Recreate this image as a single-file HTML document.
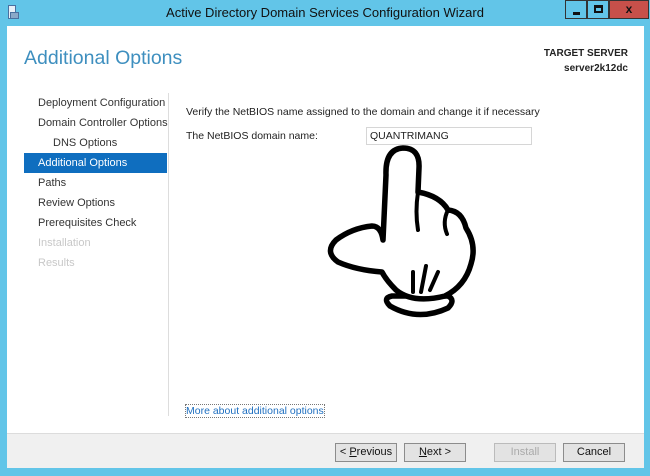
<!DOCTYPE html><html><head><style>
*{margin:0;padding:0;box-sizing:border-box}
body{width:650px;height:476px;background:#62c5e8;font-family:"Liberation Sans",sans-serif;position:relative;overflow:hidden;font-size:11px;color:#222}
.a{position:absolute}
.nav{position:absolute;left:38px;font-size:11px;color:#333}
.btn{position:absolute;top:443px;height:19px;width:62px;border:1px solid #8c8c8c;background:#e3e3e3;font-size:11px;text-align:center;line-height:17px;color:#111}
</style></head><body>
<div class="a" style="left:0;top:0;width:650px;height:26px;background:#62c5e8"></div>
<div class="a" style="left:8px;top:5px;width:8px;height:14px;background:#e8f0f8;border:1px solid #4a70a0"></div>
<div class="a" style="left:10px;top:12px;width:9px;height:7px;background:#8aa8c8;border:1px solid #4a70a0"></div>
<div class="a" style="left:0;top:5px;width:650px;text-align:center;font-size:13px;color:#111">Active Directory Domain Services Configuration Wizard</div>
<div class="a" style="left:565px;top:0;width:22px;height:19px;background:#62c5e8;border:1px solid #333"><div class="a" style="left:7px;top:11px;width:7px;height:3px;background:#111"></div></div>
<div class="a" style="left:587px;top:0;width:22px;height:19px;border:1px solid #333"><div class="a" style="left:6px;top:4px;width:9px;height:8px;border:2px solid #111;border-top-width:3px"></div></div>
<div class="a" style="left:609px;top:0;width:40px;height:19px;background:#c7504a;border:1px solid #333;color:#111;font-weight:bold;text-align:center;font-size:12px;line-height:17px">x</div>
<div class="a" style="left:7px;top:26px;width:637px;height:407px;background:#fff"></div>
<div class="a" style="left:7px;top:433px;width:637px;height:35px;background:#f0f0f0;border-top:1px solid #dcdcdc"></div>
<div class="a" style="left:24px;top:47px;font-size:19.5px;color:#3e8fbf">Additional Options</div>
<div class="a" style="right:22px;top:46px;font-size:10px;text-align:right;line-height:15px;color:#222;font-weight:bold">TARGET SERVER<br>server2k12dc</div>
<div class="nav" style="top:97px">Deployment Configuration</div>
<div class="nav" style="top:117px">Domain Controller Options</div>
<div class="nav" style="top:137px;left:53px">DNS Options</div>
<div class="a" style="left:24px;top:153px;width:143px;height:20px;background:#0f6ebf"></div>
<div class="nav" style="top:157px;color:#fff">Additional Options</div>
<div class="nav" style="top:177px">Paths</div>
<div class="nav" style="top:197px">Review Options</div>
<div class="nav" style="top:217px">Prerequisites Check</div>
<div class="nav" style="top:237px;color:#c8c8c8">Installation</div>
<div class="nav" style="top:257px;color:#c8c8c8">Results</div>
<div class="a" style="left:168px;top:93px;width:1px;height:323px;background:#ddd"></div>
<div class="a" style="left:186px;top:106px;font-size:10.5px">Verify the NetBIOS name assigned to the domain and change it if necessary</div>
<div class="a" style="left:186px;top:130px;font-size:10.5px">The NetBIOS domain name:</div>
<div class="a" style="left:366px;top:127px;width:166px;height:18px;border:1px solid #d6d6d6;padding:2px 3px;font-size:10.5px">QUANTRIMANG</div>
<div class="a" style="left:185px;top:404px;font-size:10.5px;color:#1e6fc0;border:1px dotted #777;padding:0 0">More about additional options</div>
<svg class="a" style="left:0;top:0" width="650" height="476">
<g fill="#fff" stroke="#000" stroke-width="5.5" stroke-linejoin="round" stroke-linecap="round">
<path d="M390 306 Q418 322 448 308 Q456 300 448 296 L392 296 Q382 298 390 306Z"/>
<path d="M386 175 Q385 149 403 148 Q420 148 419 168 L418 192 Q440 196 448 210 Q462 211 466 228 Q477 245 471 264 Q465 286 445 296 Q413 304 396 290 Q386 280 382 272 Q356 270 338 262 Q324 252 336 240 Q352 228 372 226 Q381 226 383 240 Z"/>
</g>
<g fill="none" stroke="#000" stroke-width="4" stroke-linecap="round">
<path d="M418 192 Q415 212 418 230"/><path d="M448 210 Q442 222 447 234"/>
<path d="M413 272 L413 292"/><path d="M426 266 L421 292"/><path d="M438 272 L430 290"/>
</g>
</svg>
<div class="btn" style="left:335px">&lt; <u>P</u>revious</div>
<div class="btn" style="left:404px"><u>N</u>ext &gt;</div>
<div class="btn" style="left:494px;color:#aaa;border-color:#bbb">Install</div>
<div class="btn" style="left:563px">Cancel</div>
</body></html>
